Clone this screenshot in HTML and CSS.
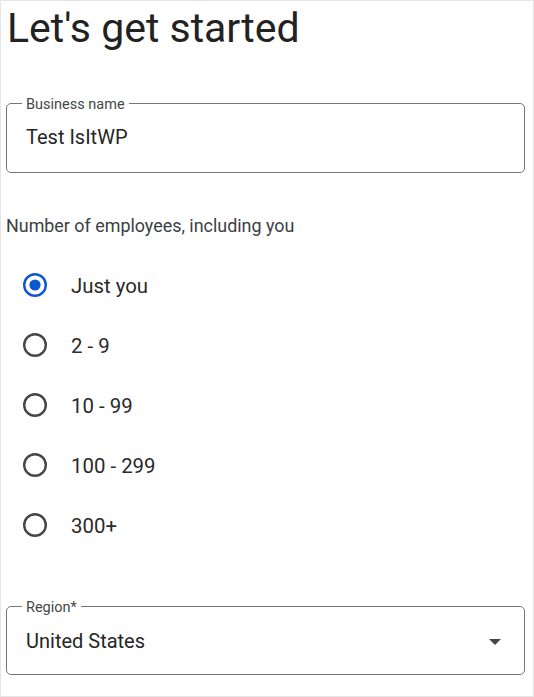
FILE: index.html
```html
<!DOCTYPE html>
<html lang="en">
<head>
<meta charset="utf-8">
<title>Let's get started</title>
<link rel="stylesheet" href="styles.css">
</head>
<body>
<main class="page">
  <h1 class="title">Let's get started</h1>

  <fieldset class="field field-name">
    <legend class="field-label">Business name</legend>
    <div class="field-value">Test IsItWP</div>
  </fieldset>

  <p class="question">Number of employees, including you</p>

  <div class="radios" role="radiogroup">
    <label class="radio-row">
      <svg class="radio checked" viewBox="0 0 24 24" width="24" height="24"><circle cx="12" cy="12" r="10.8" fill="none" stroke="#0b57d0" stroke-width="2.4"/><circle cx="12" cy="12" r="5.6" fill="#0b57d0"/></svg>
      <span class="radio-text">Just you</span>
    </label>
    <label class="radio-row">
      <svg class="radio" viewBox="0 0 24 24" width="24" height="24"><circle cx="12" cy="12" r="10.8" fill="none" stroke="#444746" stroke-width="2.4"/></svg>
      <span class="radio-text">2 - 9</span>
    </label>
    <label class="radio-row">
      <svg class="radio" viewBox="0 0 24 24" width="24" height="24"><circle cx="12" cy="12" r="10.8" fill="none" stroke="#444746" stroke-width="2.4"/></svg>
      <span class="radio-text">10 - 99</span>
    </label>
    <label class="radio-row">
      <svg class="radio" viewBox="0 0 24 24" width="24" height="24"><circle cx="12" cy="12" r="10.8" fill="none" stroke="#444746" stroke-width="2.4"/></svg>
      <span class="radio-text">100 - 299</span>
    </label>
    <label class="radio-row">
      <svg class="radio" viewBox="0 0 24 24" width="24" height="24"><circle cx="12" cy="12" r="10.8" fill="none" stroke="#444746" stroke-width="2.4"/></svg>
      <span class="radio-text">300+</span>
    </label>
  </div>

  <fieldset class="field field-region">
    <legend class="field-label">Region*</legend>
    <div class="field-value select-value">
      <span>United States</span>
      <svg class="caret" viewBox="0 0 12 6" width="12" height="6"><path d="M0 0h12L6 6z" fill="#444746"/></svg>
    </div>
  </fieldset>
</main>
</body>
</html>
```

FILE: styles.css
```css
html, body {
  margin: 0;
  padding: 0;
  background: #ffffff;
}

body {
  font-family: Roboto, "Liberation Sans", Arial, sans-serif;
  color: #1f1f1f;
}

.page {
  box-sizing: border-box;
  width: 534px;
  height: 697px;
  border: 1px solid #e6e6e6;
  padding: 3px 8px 0 5px;
  overflow: hidden;
}

.title {
  margin: 0;
  padding-left: 1px;
  font-size: 41px;
  line-height: 48px;
  font-weight: 400;
  color: #222222;
}

.field {
  box-sizing: border-box;
  margin: 41px 0 0 0;
  padding: 0;
  min-width: 0;
  width: 519px;
  border: 1px solid #747775;
  border-radius: 5px;
}

.field-label {
  margin-left: 15px;
  padding: 4px 4px 0 4px;
  font-size: 14.5px;
  line-height: 16px;
  color: #444746;
}

.field-value {
  padding: 12px 0 23px 19px;
  font-size: 20px;
  line-height: 24px;
  color: #262626;
}

.field-region {
  margin-top: 41px;
}

.select-value {
  display: flex;
  align-items: center;
  justify-content: space-between;
  padding: 13px 23px 21px 19px;
}

.caret {
  display: block;
  width: 12px;
  height: 6px;
  margin-top: 1px;
}

.question {
  margin: 41px 0 0 0;
  font-size: 17.9px;
  line-height: 24px;
  color: #3c4043;
}

.radios {
  margin-top: 17px;
  display: flex;
  flex-direction: column;
}

.radio-row {
  display: flex;
  align-items: center;
  height: 60px;
  padding-left: 17px;
  gap: 24px;
}

.radio {
  display: block;
  flex: none;
}

.radio-text {
  font-size: 20.4px;
  line-height: 24px;
  color: #2a2a2a;
  margin-top: 2px;
}
```
